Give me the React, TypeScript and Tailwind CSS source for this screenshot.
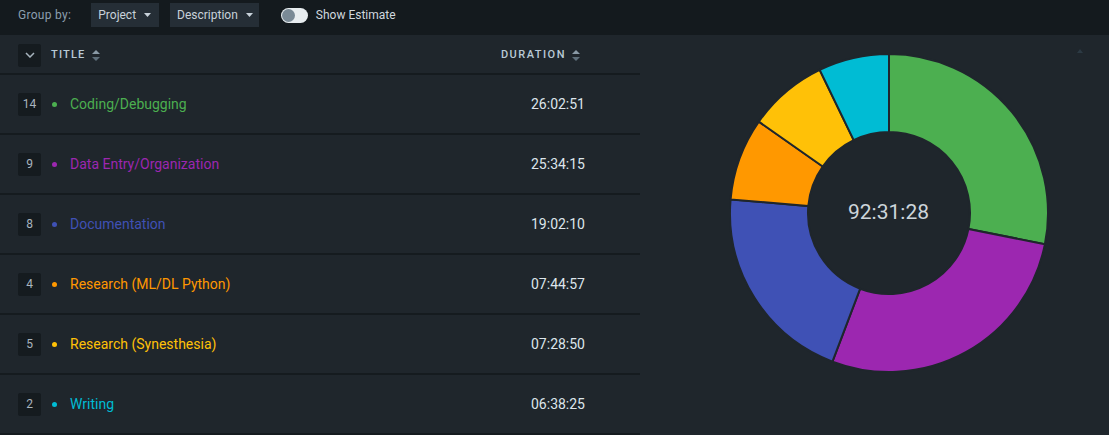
import React from 'react';

interface Entry {
    count: number;
    title: string;
    duration: string;
    seconds: number;
    color: string;
}

const entries: Entry[] = [
    { count: 14, title: 'Coding/Debugging', duration: '26:02:51', seconds: 93771, color: '#4caf50' },
    { count: 9, title: 'Data Entry/Organization', duration: '25:34:15', seconds: 92055, color: '#9c27b0' },
    { count: 8, title: 'Documentation', duration: '19:02:10', seconds: 68530, color: '#3f51b5' },
    { count: 4, title: 'Research (ML/DL Python)', duration: '07:44:57', seconds: 27897, color: '#ff9800' },
    { count: 5, title: 'Research (Synesthesia)', duration: '07:28:50', seconds: 26930, color: '#ffc107' },
    { count: 2, title: 'Writing', duration: '06:38:25', seconds: 23905, color: '#00bcd4' },
];

const textColors: Record<string, string> = {
    '#4caf50': 'text-[#4caf50]',
    '#9c27b0': 'text-[#9c27b0]',
    '#3f51b5': 'text-[#3f51b5]',
    '#ff9800': 'text-[#ff9800]',
    '#ffc107': 'text-[#ffc107]',
    '#00bcd4': 'text-[#00bcd4]',
};

const dotColors: Record<string, string> = {
    '#4caf50': 'bg-[#4caf50]',
    '#9c27b0': 'bg-[#9c27b0]',
    '#3f51b5': 'bg-[#3f51b5]',
    '#ff9800': 'bg-[#ff9800]',
    '#ffc107': 'bg-[#ffc107]',
    '#00bcd4': 'bg-[#00bcd4]',
};

const SortIcon = () => (
    <svg width="8" height="11" viewBox="0 0 8 11" className="ml-1.5">
        <path d="M4 0 L8 4 L0 4 Z" fill="#8a9aa6" />
        <path d="M4 11 L8 7 L0 7 Z" fill="#5f6f7b" />
    </svg>
);

const Caret = () => (
    <svg width="7" height="4" viewBox="0 0 7 4" className="ml-[8px]">
        <path d="M0 0 L7 0 L3.5 4 Z" fill="#c8d2da" />
    </svg>
);

const Donut = () => {
    const cx = 160;
    const cy = 160;
    const R = 159;
    const r = 81;
    const total = entries.reduce((s, e) => s + e.seconds, 0);
    let acc = 0;
    const pt = (rad: number, a: number) => [cx + rad * Math.sin(a), cy - rad * Math.cos(a)];
    return (
        <div className="relative w-[320px] h-[320px]">
            <svg width="320" height="320" viewBox="0 0 320 320">
                {entries.map((e) => {
                    const a0 = (acc / total) * Math.PI * 2;
                    acc += e.seconds;
                    const a1 = (acc / total) * Math.PI * 2;
                    const large = a1 - a0 > Math.PI ? 1 : 0;
                    const [x0, y0] = pt(R, a0);
                    const [x1, y1] = pt(R, a1);
                    const [x2, y2] = pt(r, a1);
                    const [x3, y3] = pt(r, a0);
                    const d = `M${x0} ${y0} A${R} ${R} 0 ${large} 1 ${x1} ${y1} L${x2} ${y2} A${r} ${r} 0 ${large} 0 ${x3} ${y3} Z`;
                    return <path key={e.title} d={d} fill={e.color} stroke="#1f262c" strokeWidth="2" />;
                })}
            </svg>
            <div className="absolute inset-0 flex items-center justify-center text-[21px] text-[#cdd5db]">
                92:31:28
            </div>
        </div>
    );
};

export default function App() {
    return (
        <div className="w-[1109px] h-[435px] bg-[#1f262c] overflow-hidden" style={{ fontFamily: 'Roboto, "Liberation Sans", sans-serif' }}>
            <div className="h-[35px] bg-[#141a1e] flex items-center pl-[18px] pb-[5px] text-[12px]">
                <span className="text-[#8c9fae] tracking-[0.3px]">Group by:</span>
                <div className="ml-[20px] h-[24px] pl-[7px] pr-[8px] bg-[#252e36] flex items-center text-[#c8d2da]">
                    Project <Caret />
                </div>
                <div className="ml-[11px] h-[24px] pl-[7px] pr-[6px] bg-[#252e36] flex items-center text-[#c8d2da]">
                    Description <Caret />
                </div>
                <div className="ml-[22px] w-[27px] h-[15px] rounded-full bg-[#e8edf0] relative">
                    <div className="absolute left-[1px] top-[1px] w-[13px] h-[13px] rounded-full bg-[#7a8a96]" />
                </div>
                <span className="ml-[8px] text-[#d0d8de]">Show Estimate</span>
            </div>
            <div className="flex">
                <div className="w-[640px] shrink-0">
                    <div className="h-[40px] flex items-center border-b-2 border-[#151b1f] pt-[2px]">
                        <div className="ml-[18px] w-[23px] h-[23px] bg-[#151b1f] rounded-[2px] flex items-center justify-center">
                            <svg width="10" height="6" viewBox="0 0 10 6">
                                <path d="M1 1 L5 5 L9 1" stroke="#a7b4be" strokeWidth="1.5" fill="none" />
                            </svg>
                        </div>
                        <div className="ml-[10px] flex items-center text-[11px] font-medium tracking-[1.2px] text-[#b9cad6]">
                            TITLE <SortIcon />
                        </div>
                        <div className="ml-auto mr-[60px] flex items-center text-[11px] font-medium tracking-[1.5px] text-[#b9cad6]">
                            DURATION <SortIcon />
                        </div>
                    </div>
                    {entries.map((e) => (
                        <div key={e.title} className="h-[60px] flex items-center border-b-2 border-[#151b1f]">
                            <div className="ml-[18px] w-[23px] h-[23px] bg-[#151b1f] rounded-[2px] flex items-center justify-center text-[12px] text-[#a9b5bf]">
                                {e.count}
                            </div>
                            <div className={`ml-[11px] w-[5px] h-[5px] rounded-full ${dotColors[e.color]}`} />
                            <div className={`ml-[13px] text-[14px] ${textColors[e.color]}`}>{e.title}</div>
                            <div className="ml-auto mr-[55px] text-[14px] text-[#dde5eb]">{e.duration}</div>
                        </div>
                    ))}
                </div>
                <div className="flex-1 relative flex justify-center pt-[18px]">
                    <div className="ml-[28px]">
                        <Donut />
                    </div>
                    <div className="absolute right-[26px] top-[14px] w-0 h-0 border-l-[3px] border-r-[3px] border-b-[4px] border-l-transparent border-r-transparent border-b-[#2c3a44]" />
                </div>
            </div>
        </div>
    );
}
